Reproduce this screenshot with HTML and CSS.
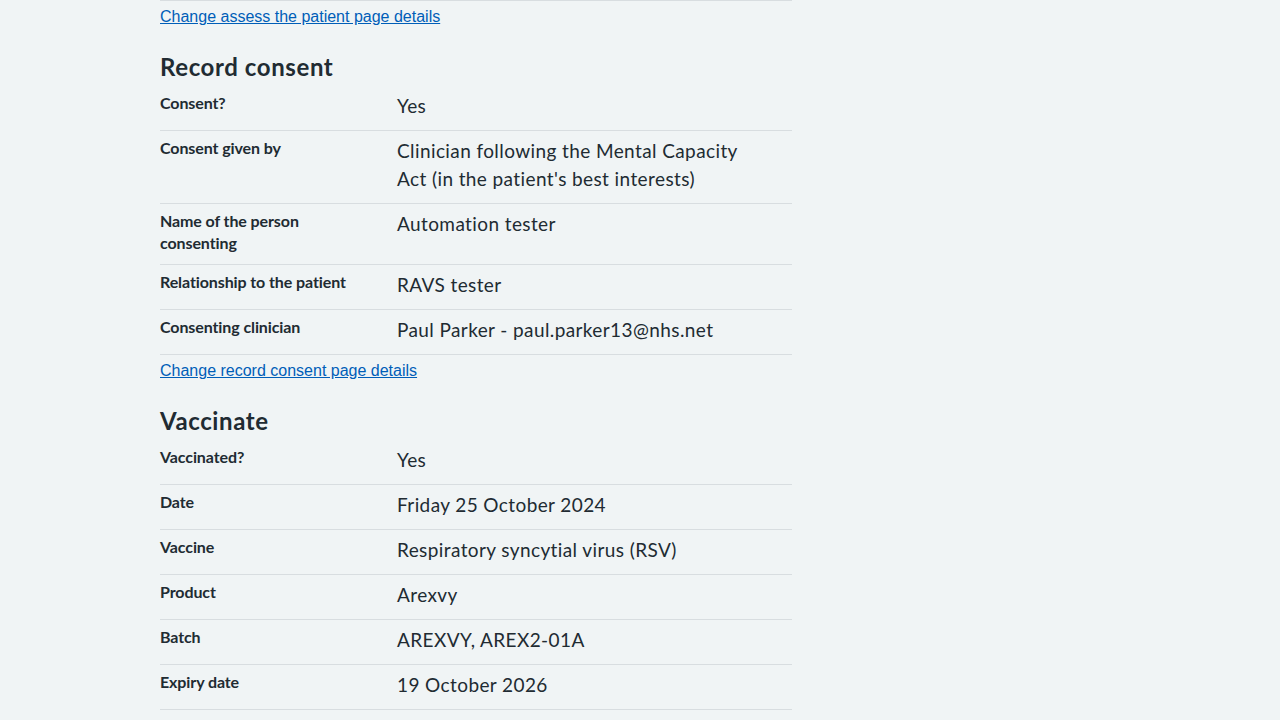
FILE: index.html
```html
<!DOCTYPE html>
<html lang="en">
<head>
<meta charset="utf-8">
<title>Check and confirm</title>
<link rel="stylesheet" href="styles.css">
</head>
<body>
<main class="page">
  <div class="section-end"></div>
  <p class="change"><a href="#">Change assess the patient page details</a></p>

  <h2 class="heading">Record consent</h2>
  <dl class="summary">
    <div class="row"><dt class="key">Consent?</dt><dd class="value">Yes</dd></div>
    <div class="row"><dt class="key">Consent given by</dt><dd class="value">Clinician following the Mental Capacity Act (in the patient's best interests)</dd></div>
    <div class="row"><dt class="key">Name of the person consenting</dt><dd class="value">Automation tester</dd></div>
    <div class="row"><dt class="key">Relationship to the patient</dt><dd class="value">RAVS tester</dd></div>
    <div class="row"><dt class="key">Consenting clinician</dt><dd class="value">Paul Parker - paul.parker13@nhs.net</dd></div>
  </dl>
  <p class="change"><a href="#">Change record consent page details</a></p>

  <h2 class="heading">Vaccinate</h2>
  <dl class="summary">
    <div class="row"><dt class="key">Vaccinated?</dt><dd class="value">Yes</dd></div>
    <div class="row"><dt class="key">Date</dt><dd class="value">Friday 25 October 2024</dd></div>
    <div class="row"><dt class="key">Vaccine</dt><dd class="value">Respiratory syncytial virus (RSV)</dd></div>
    <div class="row"><dt class="key">Product</dt><dd class="value">Arexvy</dd></div>
    <div class="row"><dt class="key">Batch</dt><dd class="value">AREXVY, AREX2-01A</dd></div>
    <div class="row"><dt class="key">Expiry date</dt><dd class="value">19 October 2026</dd></div>
  </dl>
</main>
</body>
</html>
```

FILE: styles.css
```css
html, body {
  margin: 0;
  padding: 0;
  background: #f0f4f5;
}

body {
  font-family: "Lato", "Noto Sans", sans-serif;
  color: #212b32;
}

.page {
  width: 632px;
  margin-left: 160px;
}

.section-end {
  border-top: 1px solid #d8dde0;
}

.change {
  margin: 4px 0 0;
  font-family: "Liberation Sans", Arial, sans-serif;
  font-size: 16px;
  line-height: 24px;
}

.change a {
  color: #005eb8;
  text-decoration: underline;
}

.heading {
  margin: 22px 0 3px;
  font-size: 24px;
  line-height: 32px;
  font-weight: 700;
  letter-spacing: 0.6px;
}

.summary {
  margin: 0;
}

.row {
  display: grid;
  grid-template-columns: 237px 1fr;
  border-bottom: 1px solid #d8dde0;
}

.key {
  margin: 0;
  padding: 6px 24px 10px 0;
  font-size: 16px;
  line-height: 22px;
  font-weight: 700;
  letter-spacing: -0.1px;
}

.value {
  margin: 0;
  padding: 6px 24px 10px 0;
  font-size: 19px;
  line-height: 28px;
  letter-spacing: 0.4px;
}
```
